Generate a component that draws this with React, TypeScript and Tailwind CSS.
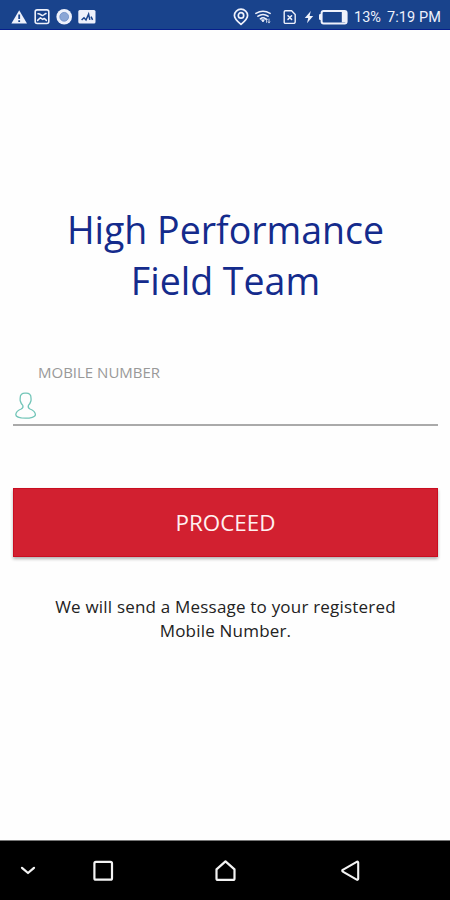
const iconStroke = {
  fill: 'none',
  stroke: 'currentColor',
  strokeLinecap: 'round',
  strokeLinejoin: 'round',
} as const

function NotificationIcons() {
  return (
    <div className="flex items-center gap-1.5">
      <svg className="h-4 w-[17px]" viewBox="0 0 17 16">
        <path d="M8.2 1.2 16 14.6H.4Z" fill="currentColor" />
        <path d="M8.2 5.6V10M8.2 11.2V13" stroke="#19438c" strokeWidth="1.8" />
      </svg>
      <svg className="h-4 w-4" viewBox="0 0 16 16" {...iconStroke}>
        <rect x="1.2" y="0.9" width="13.6" height="13.6" rx="2" strokeWidth="1.6" />
        <path d="M4 4.8C6 4 7.4 7.4 9 6.4c1.2-.6 2-1.6 3-1.8M3.6 11.4 6.4 8.8l2.4 1.6 1.4-1 2.2 2" strokeWidth="1.5" />
      </svg>
      <svg className="h-4 w-4" viewBox="0 0 16 16">
        <circle cx="8.2" cy="7.8" r="7.8" fill="currentColor" />
        <circle cx="8.2" cy="7.8" r="4.4" fill="#8ba6d6" stroke="#6b8bc5" strokeWidth="0.8" />
      </svg>
      <svg className="h-4 w-[18px]" viewBox="0 0 18 16">
        <rect x="0.3" y="1" width="17.2" height="13.6" rx="1.5" fill="currentColor" />
        <path d="M3.6 11 6 8.8 8 11l2.6-5.8 1.2 5.6M13 7.6l1.6 3.2" fill="none" stroke="#19438c" strokeWidth="1.5" />
      </svg>
    </div>
  )
}

function SystemIcons() {
  return (
    <div className="flex items-center">
      <svg className="h-[18px] w-4" viewBox="0 0 16 18" {...iconStroke}>
        <path d="M8 16.4C5 13.8 1.4 10.8 1.4 7.4a6.6 6.2 0 0 1 13.2 0C14.6 10.8 11 13.8 8 16.4Z" strokeWidth="1.7" />
        <circle cx="8" cy="7.4" r="2.7" strokeWidth="1.7" />
      </svg>
      <svg className="ml-1.5 h-4 w-4" viewBox="0 0 16 16" {...iconStroke}>
        <path d="M.9 4.4Q8 .2 15.1 4.4M3 7.2q5-3.4 10 0M5.4 9.8q2.6-2 5.2 0" strokeWidth="1.6" />
        <path d="m6.6 11 1.4 2 1.2-2Z" fill="currentColor" strokeWidth="0.8" />
        <path d="M11.6 9.8v3.6m-.9-2.6.9-1 .9 1M14 10v3.8m-.8-1 .8 1 .8-1" strokeWidth="0.8" />
      </svg>
      <svg className="ml-3 h-4 w-3.5" viewBox="0 0 14 16" {...iconStroke}>
        <path d="M2.4 1.8h6.2l3.6 3.8v7.2a1.6 1.6 0 0 1-1.6 1.6H2.4a1.2 1.2 0 0 1-1.2-1.2V3a1.2 1.2 0 0 1 1.2-1.2Z" strokeWidth="1.4" />
        <path d="m5 6.8 3.6 3.6m0-3.6L5 10.4" strokeWidth="1.5" />
      </svg>
      <svg className="ml-[7px] h-4 w-2.5" viewBox="0 0 10 16">
        <path d="M6.8 2 .8 9h3.4L3 14.2 9.2 7H5.6Z" fill="currentColor" />
      </svg>
      <svg className="ml-1 h-4 w-[30px]" viewBox="0 0 30 16">
        <path d="M4 5H2.2A1.2 1.2 0 0 0 1 6.2v3.6A1.2 1.2 0 0 0 2.2 11H4" fill="currentColor" />
        <rect x="3.6" y="2" width="25" height="12.4" rx="2" fill="none" stroke="currentColor" strokeWidth="2" />
        <path d="M23.8 3h4.4v10.4h-4.4Z" fill="currentColor" />
      </svg>
    </div>
  )
}

function StatusBar() {
  return (
    <header className="flex h-[30px] shrink-0 items-center justify-between border-b border-[#071f8c] bg-[#19438c] pt-1 pr-[9px] pl-[11px] text-[#eef1fb]">
      <NotificationIcons />
      <div className="flex items-center font-['Roboto',sans-serif] text-[14.5px] leading-none whitespace-nowrap">
        <SystemIcons />
        <span className="ml-1.5 pt-[3px]">13%</span>
        <span className="ml-1.5 pt-[3px] tracking-[0.1px]">7:19 PM</span>
      </div>
    </header>
  )
}

function NavigationBar() {
  return (
    <nav className="flex h-[60px] shrink-0 items-center border-t border-[#777] bg-black pl-[18px] text-[#f3f3f3]">
      <svg className="h-5 w-5" viewBox="0 0 20 20" {...iconStroke}>
        <path d="m4 6.8 6 5.2 6-5.2" strokeWidth="2.2" />
      </svg>
      <svg className="ml-[53px] h-6 w-6" viewBox="0 0 24 24" {...iconStroke}>
        <rect x="3.4" y="2.9" width="17.6" height="17.8" rx="1.5" strokeWidth="2.2" />
      </svg>
      <svg className="ml-[98px] h-6 w-6" viewBox="0 0 24 24" {...iconStroke}>
        <path d="M12.5 2.4 3.5 10.4v9a1.5 1.5 0 0 0 1.5 1.5h15a1.5 1.5 0 0 0 1.5-1.5v-9Z" strokeWidth="2.2" />
      </svg>
      <svg className="ml-[101px] h-6 w-6" viewBox="0 0 24 24" {...iconStroke}>
        <path d="M20.2 3.6v16.2a1 1 0 0 1-1.5.9L4.8 12.6a1 1 0 0 1 0-1.8L18.7 2.8a1 1 0 0 1 1.5.8Z" strokeWidth="2.1" />
      </svg>
    </nav>
  )
}

export default function App() {
  return (
    <div className="flex h-[900px] w-[450px] flex-col overflow-hidden bg-[#fefefe] font-['Open_Sans','Noto_Sans',sans-serif]">
      <StatusBar />
      <main className="flex flex-1 flex-col pt-[174px] pr-3 pl-[13px]">
        <h1 className="text-center text-[37.5px] leading-[51px] font-normal text-[#142b8c]">
          High Performance
          <br />
          Field Team
        </h1>

        <div className="mt-[55px] h-[65px] border-b-2 border-[#aaa]">
          <label htmlFor="mobile" className="ml-[25px] block h-[22px] text-[15px] leading-[22px] text-[#999]">
            MOBILE NUMBER
          </label>
          <div className="mt-[9px] flex h-7 items-center">
            <svg className="h-7 w-6 shrink-0 text-[#72c5b8]" viewBox="0 0 24 28" {...iconStroke}>
              <path
                d="M12.6 1.2C9 1 7.1 2.4 7.2 6c0 1.2-.3 1.8.1 3 .4 1.6 1 2.8 2.5 4.4.6 1.8 0 2.8-1.6 3.6-3.4 1.4-5.4 3-5.4 5.8 0 2.2 5 3.4 9.8 3.4s9.8-1.2 9.8-3.4c0-2.8-2-4.4-5.4-5.8-1.6-.8-2.2-1.8-1.6-3.6 1.5-1.6 2.1-2.8 2.5-4.4.4-1.2.1-1.8.1-3 .1-3.6-1.8-5-5.4-4.8Z"
                strokeWidth="1.3"
              />
            </svg>
            <input id="mobile" type="tel" className="h-6 flex-1 bg-transparent pl-1 text-lg outline-none" />
          </div>
        </div>

        <button className="mt-[62px] h-[69px] w-full border border-[#c90d20] bg-[#d22030] text-[22.4px] text-[#fff0f0] shadow-[0_2px_3px_rgba(0,0,0,0.3)]">
          PROCEED
        </button>

        <p className="mt-[38px] text-center text-[17px] leading-6 tracking-[0.2px] text-[#222]">
          We will send a Message to your registered
          <br />
          Mobile Number.
        </p>
      </main>
      <NavigationBar />
    </div>
  )
}
